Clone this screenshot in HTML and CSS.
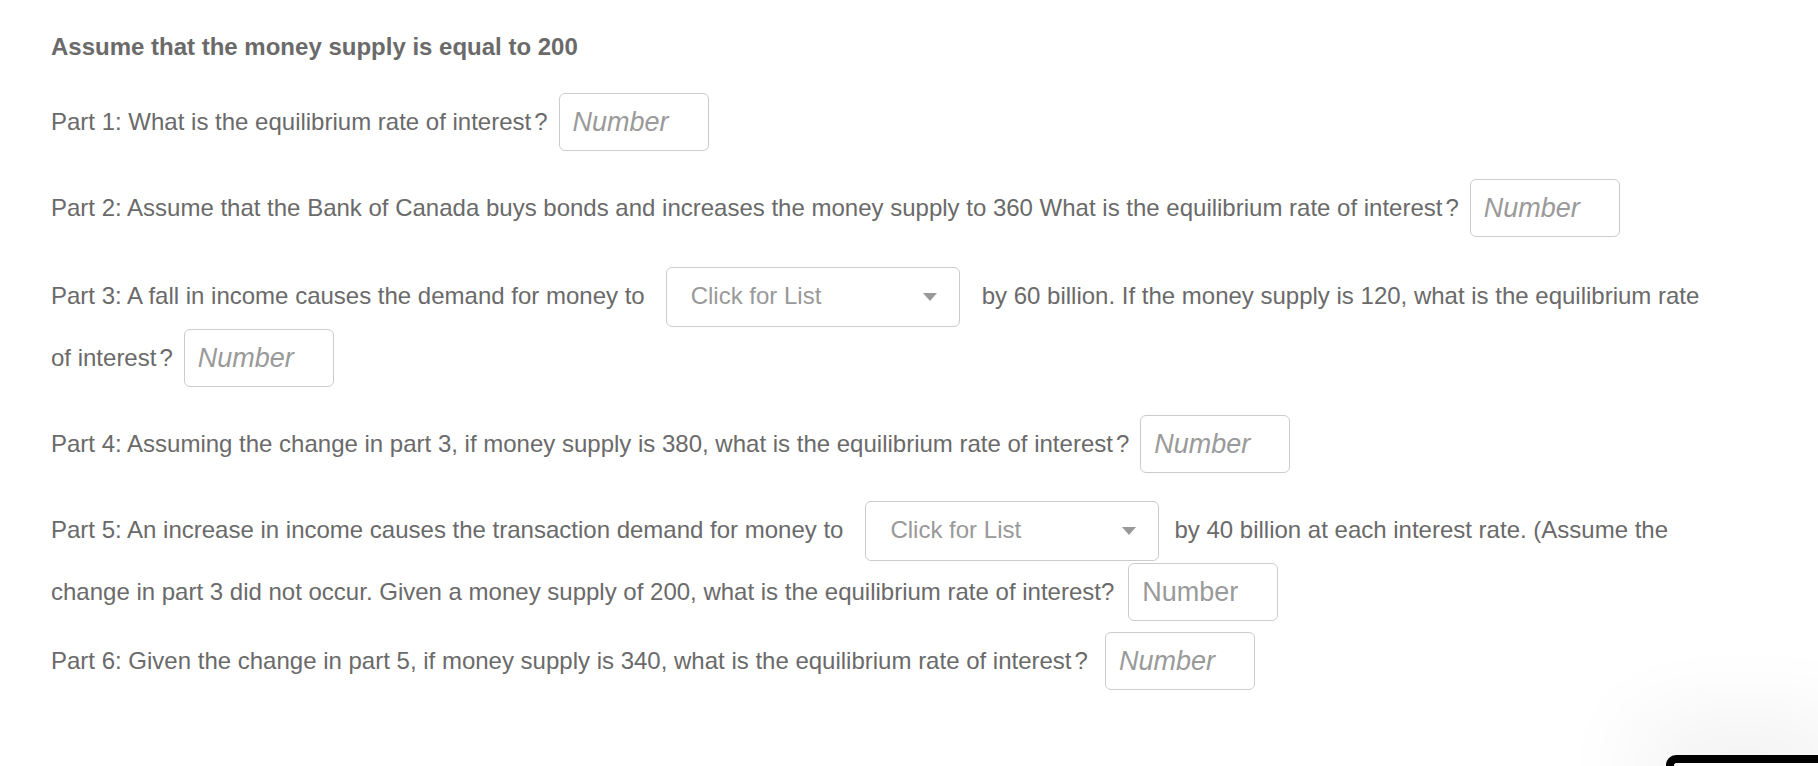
FILE: index.html
```html
<!DOCTYPE html>
<html lang="en">
<head>
<meta charset="utf-8">
<title>Money supply question</title>
<link rel="stylesheet" href="styles.css">
</head>
<body>
<div class="page">
  <div class="heading">Assume that the money supply is equal to 200</div>

  <div class="row r-p1">
    <span>Part 1: What is the equilibrium rate of interest<span class="q">?</span></span>
    <input class="num" type="text" placeholder="Number">
  </div>

  <div class="row r-p2">
    <span>Part 2: Assume that the Bank of Canada buys bonds and increases the money supply to 360 What is the equilibrium rate of interest<span class="q">?</span></span>
    <input class="num" type="text" placeholder="Number">
  </div>

  <div class="row r-p3a">
    <span>Part 3: A fall in income causes the demand for money to</span>
    <div class="dropdown dd-p3"><span>Click for List</span><svg class="caret" width="14" height="8" viewBox="0 0 14 8"><path d="M0 0H14L7 8Z" fill="#999"/></svg></div>
    <span>by 60 billion. If the money supply is 120, what is the equilibrium rate</span>
  </div>
  <div class="row r-p3b">
    <span>of interest<span class="q">?</span></span>
    <input class="num" type="text" placeholder="Number">
  </div>

  <div class="row r-p4">
    <span>Part 4: Assuming the change in part 3, if money supply is 380, what is the equilibrium rate of interest<span class="q">?</span></span>
    <input class="num" type="text" placeholder="Number">
  </div>

  <div class="row r-p5a">
    <span>Part 5: An increase in income causes the transaction demand for money to</span>
    <div class="dropdown dd-p5"><span>Click for List</span><svg class="caret" width="14" height="8" viewBox="0 0 14 8"><path d="M0 0H14L7 8Z" fill="#999"/></svg></div>
    <span>by 40 billion at each interest rate. (Assume the</span>
  </div>
  <div class="row r-p5b">
    <span>change in part 3 did not occur. Given a money supply of 200, what is the equilibrium rate of interest?</span>
    <input class="num plain" type="text" placeholder="Number">
  </div>

  <div class="row r-p6">
    <span>Part 6: Given the change in part 5, if money supply is 340, what is the equilibrium rate of interest<span class="q">?</span></span>
    <input class="num" type="text" placeholder="Number">
  </div>
</div>

<div class="corner-panel"></div>
</body>
</html>
```

FILE: styles.css
```css
html, body {
  margin: 0;
  padding: 0;
}

body {
  width: 1818px;
  height: 766px;
  overflow: hidden;
  position: relative;
  background: #ffffff;
  font-family: "Liberation Sans", Arial, Helvetica, sans-serif;
  font-size: 24px;
  color: #6a6a6a;
}

.page {
  padding: 32px 0 0 51px;
}

.heading {
  height: 30px;
  display: flex;
  align-items: center;
  font-weight: bold;
  color: #6a6a6a;
}

.row {
  display: flex;
  align-items: center;
  white-space: nowrap;
}

.r-p1 { margin-top: 31px; }
.r-p2 { margin-top: 28px; }
.r-p3a { margin-top: 30px; }
.r-p3b { margin-top: 2px; }
.r-p4 { margin-top: 28px; }
.r-p5a { margin-top: 28px; }
.r-p5b { margin-top: 2px; }
.r-p6 { margin-top: 11px; }

.r-p3a > span,
.r-p5a > span {
  margin-top: -3px;
}

.q {
  margin-left: 3px;
}

.num {
  box-sizing: border-box;
  width: 150px;
  height: 58px;
  margin: 0 0 0 11px;
  padding: 0 0 0 13px;
  border: 1.5px solid #cccccc;
  border-radius: 6px;
  background: #ffffff;
  font-family: "Liberation Sans", Arial, Helvetica, sans-serif;
  font-size: 27px;
  font-style: italic;
  color: #6a6a6a;
  outline: none;
}

.num::placeholder {
  color: #9a9a9a;
  font-style: italic;
}

.num.plain,
.num.plain::placeholder {
  font-style: normal;
}

.r-p5b .num { margin-left: 14px; }
.r-p6 .num { margin-left: 17px; }

.dropdown {
  box-sizing: border-box;
  width: 294px;
  height: 60px;
  display: flex;
  align-items: center;
  justify-content: space-between;
  padding: 0 22px 0 24px;
  border: 1.5px solid #cccccc;
  border-radius: 6px;
  background: #ffffff;
  color: #999999;
  font-size: 24px;
}

.dropdown > span {
  margin-top: -3px;
}

.dd-p3 { margin: 0 22px 0 21px; }
.dd-p5 { margin: 0 15px 0 22px; }

.caret {
  display: block;
}

.corner-panel {
  position: absolute;
  left: 1666px;
  top: 755px;
  right: 0;
  bottom: 0;
  border-top: 8px solid #000000;
  border-left: 8px solid #000000;
  border-top-left-radius: 10px;
  background: #ffffff;
  box-shadow: 0 0 90px 30px rgba(0, 0, 0, 0.07);
}
```
